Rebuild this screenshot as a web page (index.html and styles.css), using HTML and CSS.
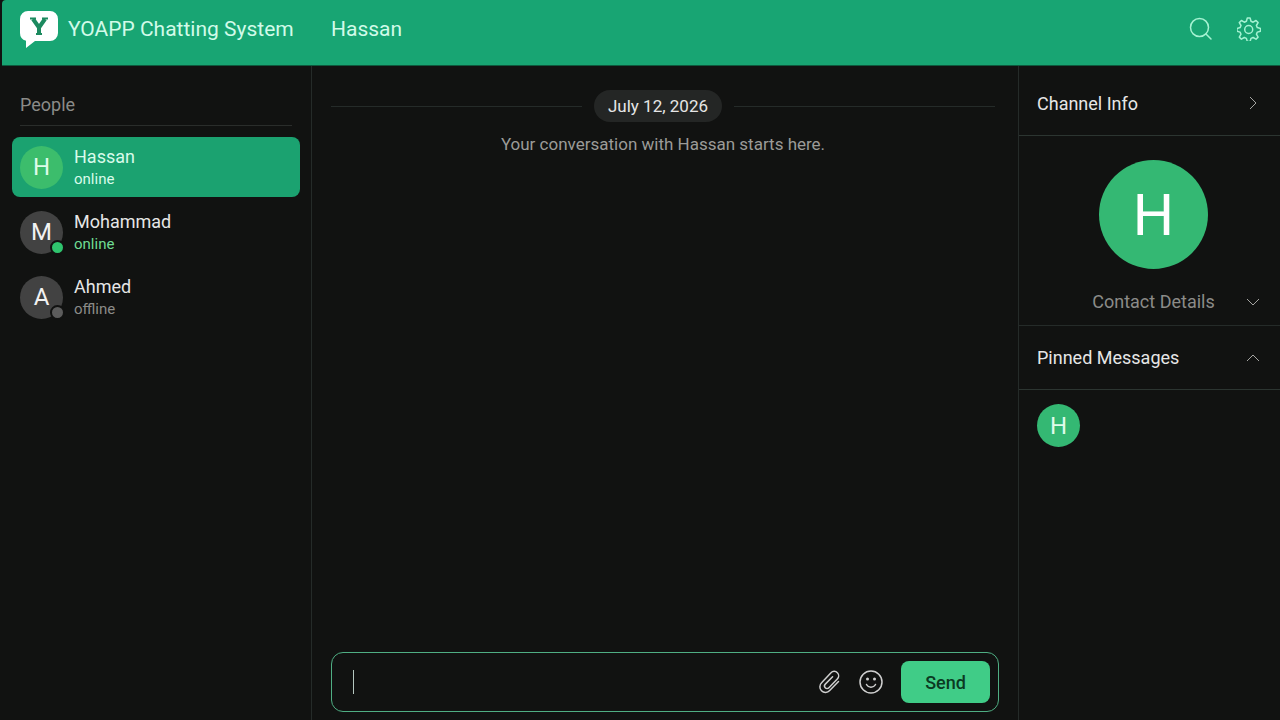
FILE: index.html
```html
<!DOCTYPE html>
<html lang="en">
<head>
    <meta charset="UTF-8">
    <meta name="viewport" content="width=device-width, initial-scale=1.0">
    <title>YOAPP Chatting System</title>
    <link rel="stylesheet" href="styles.css">
</head>
<body>

    <header class="topbar">
        <div class="brand">
            <svg class="logo" viewBox="0 0 38 38" width="38" height="38" aria-hidden="true">
                <path d="M8 1h22a8 8 0 0 1 8 8v14a8 8 0 0 1-8 8H15l-9 7V30.700A8 8 0 0 1 0 23V9a8 8 0 0 1 8-8z" fill="#fff"/>
                <path d="M13 9l6 8.500V24M25 9l-6 8.500" fill="none" stroke="#1c8a5f" stroke-width="4"/>
                <path d="M10 8.500h6M22 8.500h6M16 24h6" fill="none" stroke="#1c8a5f" stroke-width="2"/>
            </svg>
            <h1>YOAPP Chatting System</h1>
        </div>
        <h2 class="chat-title">Hassan</h2>
        <div class="topbar-actions">
            <button type="button" class="icon-btn" aria-label="Search">
                <svg viewBox="0 0 24 24" width="24" height="24">
                    <circle cx="10.500" cy="10.500" r="9"/>
                    <path d="M17 17l5 5"/>
                </svg>
            </button>
            <button type="button" class="icon-btn" aria-label="Settings">
                <svg viewBox="0 0 24 24" width="24" height="24">
                    <path d="M10.300 1h2.800l.9 3.300 2.100.9 2.900-1.700 2.100 2.100-1.700 2.900.9 2.100 3.200.8v2.800l-3.200.9-.9 2.100 1.700 2.900-2.100 2.100-2.900-1.700-2.100.9-.9 3.100h-2.800l-.9-3.100-2.100-.9-2.900 1.700-2.100-2.100 1.700-2.900-.9-2.100-3.100-.9v-2.800l3.100-.8.9-2.100-1.700-2.900 2.100-2.100 2.900 1.700 2.100-.9z"/>
                    <circle cx="11.700" cy="12.500" r="4"/>
                </svg>
            </button>
        </div>
    </header>

    <div class="app">
        <!-- People list -->
        <aside class="sidebar">
            <h3 class="sidebar-title">People</h3>
            <nav class="people">
                <a href="#" class="person active">
                    <span class="avatar green">H</span>
                    <span class="person-info">
                        <span class="name">Hassan</span>
                        <span class="status">online</span>
                    </span>
                </a>
                <a href="#" class="person">
                    <span class="avatar">M<span class="dot online"></span></span>
                    <span class="person-info">
                        <span class="name">Mohammad</span>
                        <span class="status online">online</span>
                    </span>
                </a>
                <a href="#" class="person">
                    <span class="avatar">A<span class="dot"></span></span>
                    <span class="person-info">
                        <span class="name">Ahmed</span>
                        <span class="status offline">offline</span>
                    </span>
                </a>
            </nav>
        </aside>

        <!-- Conversation -->
        <main class="chat">
            <div class="messages">
                <div class="date-row"><span class="date">July 12, 2026</span></div>
                <p class="start-note">Your conversation with Hassan starts here.</p>
            </div>
            <form class="composer">
                <span class="caret"></span>
                <input type="text" class="message-input" aria-label="Message" autocomplete="off">
                <button type="button" class="icon-btn" aria-label="Attach file">
                    <svg viewBox="0 0 24 24" width="24" height="24">
                        <path d="M21.500 11.500l-8.800 9a5.600 5.600 0 0 1-8.200.2 5.600 5.600 0 0 1 .1-8L14 2.800a4.300 4.300 0 0 1 6.400 0 4.400 4.400 0 0 1-.1 6.200l-8.400 8.700a2.500 2.500 0 0 1-3.700 0 2.600 2.600 0 0 1 .1-3.600l7.300-7.400"/>
                    </svg>
                </button>
                <button type="button" class="icon-btn" aria-label="Emoji">
                    <svg viewBox="0 0 24 24" width="24" height="24">
                        <circle cx="12" cy="12" r="11"/>
                        <path d="M7.500 14.500c2 3.500 7 3.500 9 0"/>
                        <circle class="eye" cx="8.500" cy="9" r="1.500"/>
                        <circle class="eye" cx="15.500" cy="9" r="1.500"/>
                    </svg>
                </button>
                <button type="submit" class="btn-send">Send</button>
            </form>
        </main>

        <!-- Channel details -->
        <aside class="info">
            <button type="button" class="info-head">
                Channel Info
                <svg viewBox="0 0 16 16" width="16" height="16"><path d="M5 2l6 6-6 6"/></svg>
            </button>
            <section class="profile">
                <span class="avatar green large">H</span>
                <button type="button" class="contact-details">
                    <span>Contact Details</span>
                    <svg viewBox="0 0 16 16" width="16" height="16"><path d="M2 5l6 6 6-6"/></svg>
                </button>
            </section>
            <button type="button" class="info-head">
                Pinned Messages
                <svg viewBox="0 0 16 16" width="16" height="16"><path d="M2 11l6-6 6 6"/></svg>
            </button>
            <div class="pinned">
                <span class="avatar green">H</span>
            </div>
        </aside>
    </div>

</body>
</html>
```

FILE: styles.css
```css
* {
    box-sizing: border-box;
}

body {
    font-family: Roboto, sans-serif;
    background-color: #111211;
    color: #e6e6e6;
    margin: 0;
    height: 100vh;
    display: flex;
    flex-direction: column;
}

h1, h2, h3, p {
    margin: 0;
    font-weight: 400;
}

button {
    font-family: inherit;
    color: inherit;
    background: none;
    border: none;
    padding: 0;
    cursor: pointer;
}

svg {
    display: block;
    flex-shrink: 0;
}

/* Top bar */
.topbar {
    display: flex;
    align-items: center;
    height: 66px;
    margin-left: 2px;
    padding: 0 19px 8px 18px;
    background-color: #18a573;
    border-bottom: 1px solid #0d5a3e;
    border-top-left-radius: 4px;
    color: #d2fbe9;
}

.brand {
    display: flex;
    align-items: center;
    gap: 10px;
    width: 311px;
}

.brand h1,
.chat-title {
    font-size: 21px;
}

.topbar-actions {
    display: flex;
    gap: 24px;
    margin-left: auto;
}

.icon-btn svg {
    fill: none;
    stroke: currentColor;
    stroke-width: 1.5;
    stroke-linecap: round;
    stroke-linejoin: round;
}

.topbar .icon-btn {
    color: #a5f2d2;
}

/* Columns */
.app {
    display: flex;
    flex: 1;
    min-height: 0;
}

.sidebar {
    width: 312px;
    padding: 24px 11px 0 12px;
    border-right: 1px solid #252b29;
}

.sidebar-title {
    margin: 0 8px 11px;
    padding-bottom: 6px;
    font-size: 18px;
    line-height: 29px;
    color: #8b8b88;
    border-bottom: 1px solid #2a2d2b;
}

.people {
    display: flex;
    flex-direction: column;
    gap: 5px;
}

.person {
    display: flex;
    align-items: center;
    gap: 11px;
    height: 60px;
    padding: 0 8px;
    border-radius: 8px;
    color: #e6e6e6;
    text-decoration: none;
}

.person.active {
    background-color: #1ba270;
    color: #d8fbea;
}

.person-info {
    display: flex;
    flex-direction: column;
    padding-top: 2px;
}

.name {
    font-size: 18px;
    line-height: 22px;
}

.status {
    font-size: 15px;
    line-height: 22px;
}

.status.online {
    color: #6fdc93;
}

.status.offline {
    color: #8b8b88;
}

/* Round initials */
.avatar {
    position: relative;
    display: flex;
    align-items: center;
    justify-content: center;
    width: 43px;
    height: 43px;
    border-radius: 50%;
    background-color: #424242;
    color: #f2f2f2;
    font-size: 24px;
}

.avatar.green {
    background-color: #34b873;
    color: #dffbea;
}

.active .avatar.green {
    background-color: #3cbd6c;
}

.avatar.large {
    width: 109px;
    height: 109px;
    font-size: 58px;
    color: #fff;
}

.dot {
    position: absolute;
    right: -2px;
    bottom: -1px;
    width: 15px;
    height: 15px;
    border: 2px solid #111211;
    border-radius: 50%;
    background-color: #5c5c5c;
}

.dot.online {
    background-color: #2fc46e;
}

/* Conversation */
.chat {
    display: flex;
    flex-direction: column;
    flex: 1;
    min-width: 0;
    padding: 24px 19px 8px;
}

.messages {
    flex: 1;
    padding-right: 4px;
    text-align: center;
}

.date-row {
    display: flex;
    align-items: center;
    gap: 12px;
}

.date-row::before,
.date-row::after {
    content: "";
    flex: 25;
    height: 1px;
    background-color: #252b29;
}

.date-row::after {
    flex: 26;
}

.date {
    padding: 0 14px;
    border-radius: 16px;
    background-color: #242625;
    font-size: 17px;
    line-height: 32px;
}

.start-note {
    margin-top: 10px;
    font-size: 17px;
    line-height: 24px;
    color: #9b9b98;
}

.composer {
    display: flex;
    align-items: center;
    height: 60px;
    padding: 0 8px 0 21px;
    border: 1px solid #4fae83;
    border-radius: 12px;
    color: #cfcfcf;
}

.caret {
    width: 1px;
    height: 24px;
    background-color: #b5c7c0;
}

.message-input {
    flex: 1;
    min-width: 0;
    height: 40px;
    background: none;
    border: none;
    outline: none;
    color: #e6e6e6;
    font-family: inherit;
    font-size: 18px;
}

.composer .icon-btn {
    margin-right: 18px;
}

.icon-btn .eye {
    fill: currentColor;
    stroke: none;
}

.btn-send {
    width: 89px;
    height: 42px;
    border-radius: 8px;
    background-color: #40cc87;
    color: #0b3a22;
    font-size: 18px;
    font-weight: 500;
}

/* Channel details */
.info {
    width: 262px;
    border-left: 1px solid #252b29;
}

.info svg {
    fill: none;
    stroke: #a5a5a2;
    stroke-width: 1;
}

.info-head {
    display: flex;
    align-items: center;
    justify-content: space-between;
    width: 100%;
    height: 64px;
    padding: 0 19px 0 18px;
    border-bottom: 1px solid #2c3531;
    font-size: 18px;
}

.info-head:first-child {
    height: 70px;
    padding-top: 5px;
}

.profile {
    display: flex;
    flex-direction: column;
    align-items: center;
    gap: 21px;
    padding: 24px 19px 11px 27px;
    border-bottom: 1px solid #252b29;
}

.contact-details {
    display: grid;
    grid-template-columns: 1fr auto 1fr;
    align-items: center;
    width: 100%;
    color: #8b8b88;
    font-size: 18px;
    line-height: 24px;
}

.contact-details span {
    grid-column: 2;
}

.contact-details svg {
    justify-self: end;
}

.pinned {
    padding: 14px 18px;
}
```
